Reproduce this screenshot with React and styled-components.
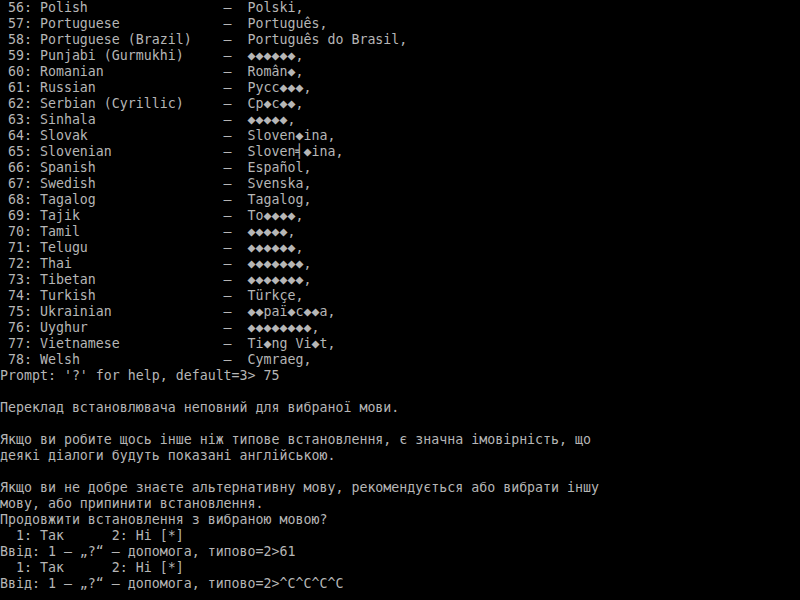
import React from 'react';
import styled, { createGlobalStyle } from 'styled-components';

const GlobalStyle = createGlobalStyle`
  html, body {
    margin: 0;
    padding: 0;
    background: #000;
  }
`;

const Screen = styled.div`
  width: 800px;
  height: 600px;
  overflow: hidden;
  background: #000;
  color: #b6b6b6;
  font-family: 'DejaVu Sans Mono', 'Liberation Mono', monospace;
  font-size: 13.28px;
  line-height: 16px;
`;

const Line = styled.div`
  height: 16px;
  white-space: pre;
`;

const languages = [
  [56, 'Polish', 'Polski'],
  [57, 'Portuguese', 'Português'],
  [58, 'Portuguese (Brazil)', 'Português do Brasil'],
  [59, 'Punjabi (Gurmukhi)', '◆◆◆◆◆◆'],
  [60, 'Romanian', 'Român◆'],
  [61, 'Russian', 'Русс◆◆◆'],
  [62, 'Serbian (Cyrillic)', 'Ср◆с◆◆'],
  [63, 'Sinhala', '◆◆◆◆◆'],
  [64, 'Slovak', 'Sloven◆ina'],
  [65, 'Slovenian', 'Sloven╡◆ina'],
  [66, 'Spanish', 'Español'],
  [67, 'Swedish', 'Svenska'],
  [68, 'Tagalog', 'Tagalog'],
  [69, 'Tajik', 'То◆◆◆◆'],
  [70, 'Tamil', '◆◆◆◆◆'],
  [71, 'Telugu', '◆◆◆◆◆◆'],
  [72, 'Thai', '◆◆◆◆◆◆◆'],
  [73, 'Tibetan', '◆◆◆◆◆◆◆'],
  [74, 'Turkish', 'Türkçe'],
  [75, 'Ukrainian', '◆◆раї◆с◆◆а'],
  [76, 'Uyghur', '◆◆◆◆◆◆◆◆'],
  [77, 'Vietnamese', 'Ti◆ng Vi◆t'],
  [78, 'Welsh', 'Cymraeg'],
];

const tail = [
  "Prompt: '?' for help, default=3> 75",
  '',
  'Переклад встановлювача неповний для вибраної мови.',
  '',
  'Якщо ви робите щось інше ніж типове встановлення, є значна імовірність, що',
  'деякі діалоги будуть показані англійською.',
  '',
  'Якщо ви не добре знаєте альтернативну мову, рекомендується або вибрати іншу',
  'мову, або припинити встановлення.',
  'Продовжити встановлення з вибраною мовою?',
  '  1: Так      2: Ні [*]',
  'Ввід: 1 – „?“ – допомога, типово=2>61',
  '  1: Так      2: Ні [*]',
  'Ввід: 1 – „?“ – допомога, типово=2>^C^C^C^C',
];

const App = () => {
  const rows = [
    ...languages.map(([n, name, native]) =>
      ` ${n}: ${name}`.padEnd(28) + '–  ' + native + ','
    ),
    ...tail,
  ];

  return (
    <>
      <GlobalStyle />
      <Screen>
        {rows.map((text, i) => (
          <Line key={i}>{text}</Line>
        ))}
      </Screen>
    </>
  );
};

export default App;
